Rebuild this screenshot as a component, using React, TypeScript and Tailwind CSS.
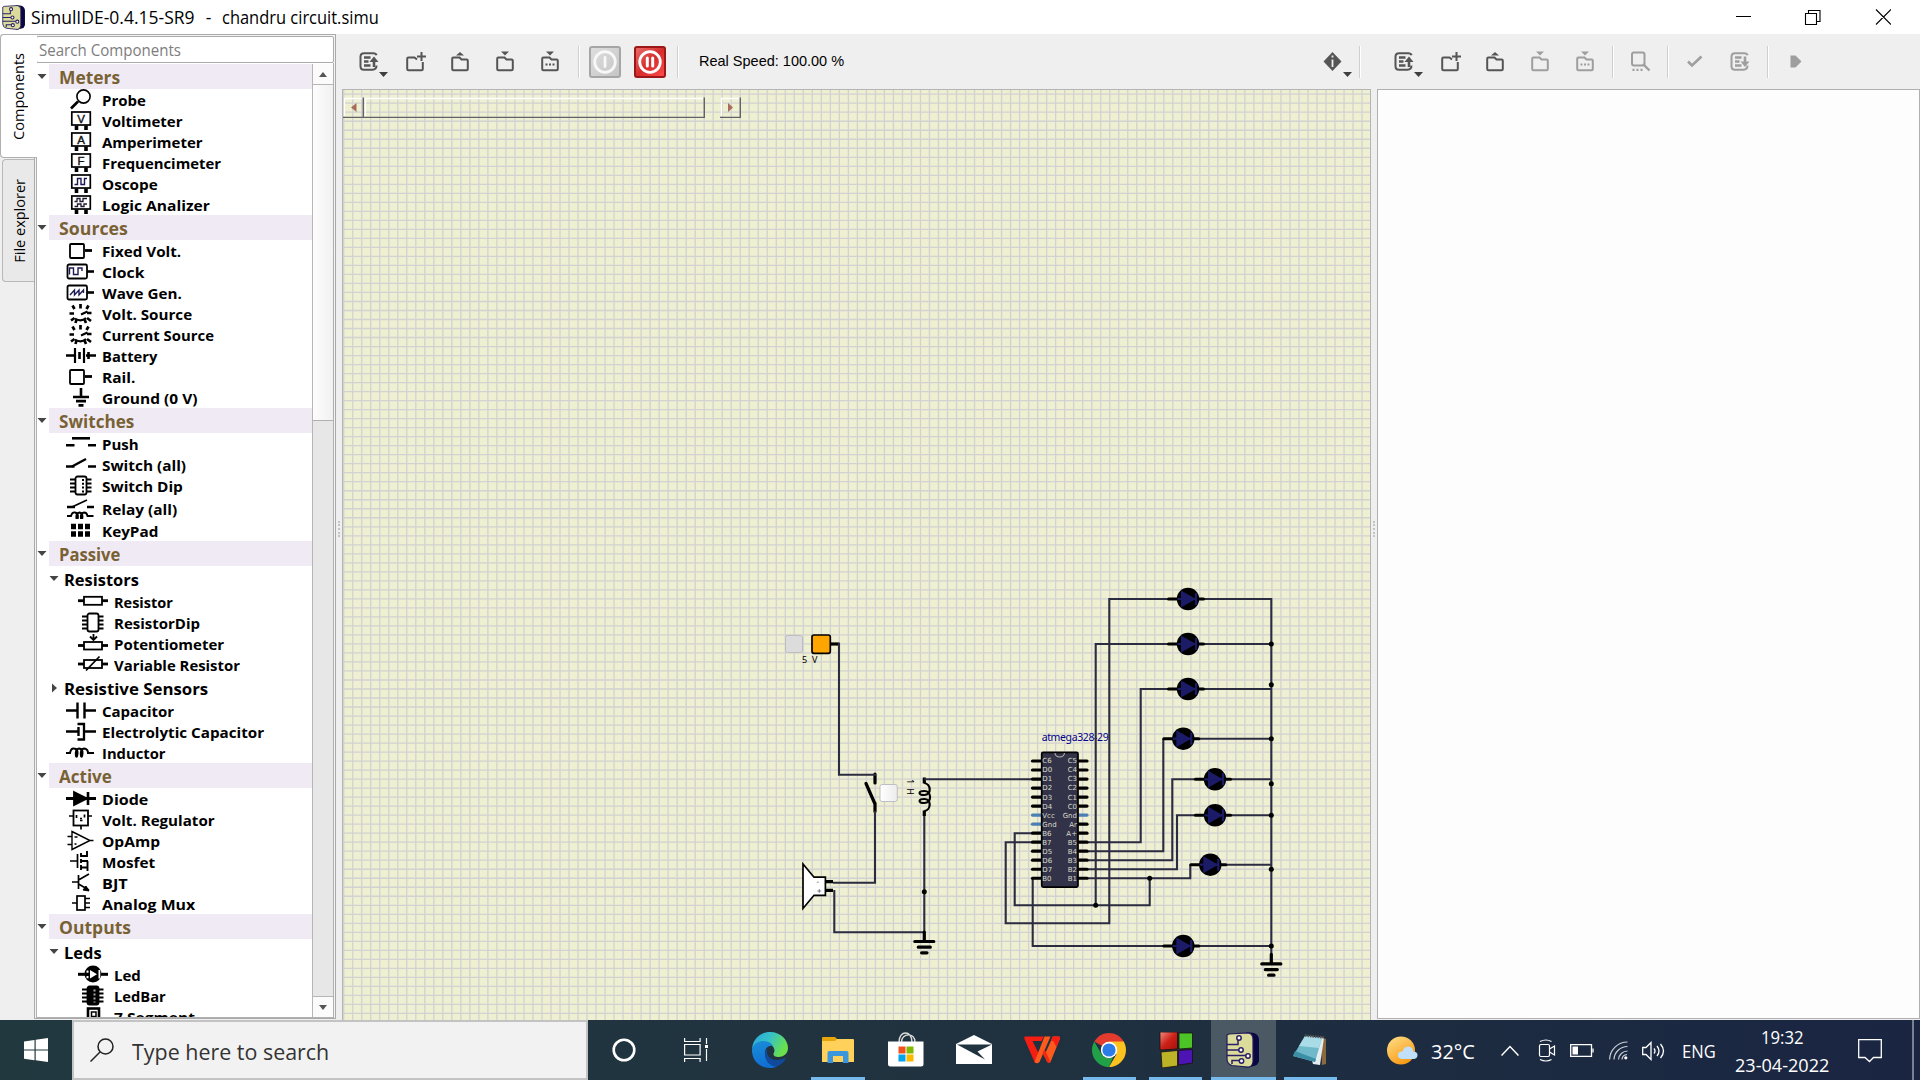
import { useLayoutEffect, useRef, useState, type ReactNode } from "react";

const OS = "font-['Open_Sans','Noto_Sans',sans-serif]";

/** Text condensed or stretched horizontally to an exact width. */
function Fit({ w, className = "", children }: { w: number; className?: string; children: string }) {
  const ref = useRef<HTMLSpanElement>(null);
  const [k, setK] = useState(1);
  useLayoutEffect(() => {
    if (ref.current) setK(w / ref.current.offsetWidth);
  }, [w]);
  return (
    <span className="block shrink-0" style={{ width: w }}>
      <span ref={ref} className={"inline-block origin-left whitespace-pre " + className} style={{ transform: `scaleX(${k})` }}>
        {children}
      </span>
    </span>
  );
}

function SimulIcon({ className }: { className: string }) {
  return (
    <svg className={className} viewBox="0 0 33 36" fill="none">
      <path d="M20 0 L28 1 Q33 3 33 8 V29 Q32 33 28 34 L20 36Z" fill="#0a0840" />
      <path d="M3 2 L22 0.8 Q27 1.5 27 7 V30 Q26 35 22 35.2 L6 33.5 Q1 32 1 27 V3Z" fill="#dbdc9c" stroke="#241a5c" strokeWidth="1.2" />
      <g stroke="#2b1e66" strokeWidth="1.5">
        <path d="M1 12.5H12V8M1 18H13M1 23.500H20M6 32V28.500H13" />
        <g fill="#fff">
          <circle cx="13" cy="6" r="2.200" /><circle cx="15" cy="18" r="2.200" /><circle cx="22" cy="24" r="2.200" /><circle cx="15.500" cy="29" r="2.200" />
        </g>
      </g>
    </svg>
  );
}

const meter = (inner: ReactNode) => (
  <>
    <rect x="5.800" y="2" width="18.500" height="13" strokeWidth="1.700" />
    <path d="M10.500 15.500v4.500M20 15.500v4.500" strokeWidth="3.600" />
    {inner}
  </>
);
const letter = (t: string) => meter(
  <text x="15" y="12.500" textAnchor="middle" fontSize="11.500" fontWeight="500" fill="#111" stroke="#111" strokeWidth="0.400" fontFamily="Liberation Sans">{t}</text>
);
const fixed = (
  <>
    <rect x="4" y="4" width="14" height="14" rx="1" />
    <path d="M19 10.500h7" strokeWidth="2.800" />
  </>
);
const boxed = (d: string) => (
  <g transform="translate(0 1)">
    <rect x="1.500" y="2.500" width="19.500" height="14" rx="1.500" />
    <path d="M21 9.500h7" strokeWidth="2.600" />
    <path d={d} stroke="#1c1a55" strokeWidth="1.400" />
  </g>
);
const dial = (
  <>
    <path d="M14.500 1v4.500M6.500 2.500l2 3.500M22.500 2.500l-2 3.500M3.500 10.500h4.500M21 10h4.500M5 17.500l3.500-2.500M25 18l-4-3M9.500 20l1-3.500M20 20l-1.500-3.500" strokeWidth="2.700" />
    <path d="M9 15.500q6 4 11-.5M15 11.500l6.500-3" strokeWidth="2" />
  </>
);
const dip = (fill: string, inner?: ReactNode) => (
  <>
    <path d="M4 4.500h21.500M4 8.500h21.500M4 12.500h21.500M4 16.500h21.500" strokeWidth="2" />
    <rect x="9.500" y="1.500" width="11" height="18" rx="2" fill={fill} />
    {inner}
  </>
);
const coil = "M0 11h4q1-5 4-4.500q4 .5 3.500 5t-1.500 2.500q-1-7 3-7.500q4 .5 3.500 5t-1.500 2.500q-1-7 3-7.500q4 .5 4 4.500h6";

const ICONS: Record<string, ReactNode> = {
  probe: <><circle cx="17.500" cy="7.500" r="6.600" strokeWidth="1.600" /><path d="M12 12.500L5 19.500" strokeWidth="2.600" /></>,
  V: letter("V"),
  A: letter("A"),
  F: letter("F"),
  scope: meter(<path d="M8.500 11.500h3v-6h3.500v6h3.500v-6h2.500" stroke="#1c1a55" strokeWidth="1.400" />),
  logic: meter(<path d="M8.500 7.500h2.500v-3h3v3h3v-3h4M8.500 12.500h3v-2.500h3.500v2.500h3v-2.500h3" stroke="#221a30" strokeWidth="1.300" />),
  fixed,
  clock: boxed("M3.500 12.500V6h4v6.500h4.500V6h4v3"),
  wave: boxed("M4 12l4.500-5v5l4.500-5v5l4.500-5v3"),
  dial,
  battery: <g transform="translate(0 1)"><path d="M0 9.500h8.500M20 9.500h10" strokeWidth="2.400" /><path d="M9 2v15M18 2v15" strokeWidth="2.200" /><path d="M13.500 6v7M22.500 6v7" strokeWidth="2.600" /></g>,
  ground: <><path d="M15 1v9M7 10h16" strokeWidth="2.600" /><path d="M10 14.200h10M12.500 18.300h5" strokeWidth="2.800" /></>,
  push: <><path d="M0 12.300h8.500M22 12.300h8" strokeWidth="2.600" /><path d="M6 5.300h18" strokeWidth="2.600" /></>,
  sw: <><path d="M0 12.500h8.500M22 12.500h8" strokeWidth="2.600" /><path d="M6 12.500L20 5" strokeWidth="2.400" /></>,
  swdip: dip("#fff", <path d="M17 4v14" strokeDasharray="2 1.800" strokeWidth="2" />),
  relay: <><path d="M1 9h8M21 9h7" strokeWidth="2.400" /><path d="M6 9L21 2M1 18h4q1-4 4-3.500q3 .5 3 4t-1.500 2.500q-1-6 3-6.500q3 .5 3 4t-1.500 2.500q-1-6 3-6.500q3 0 3.500 3.500h6" strokeWidth="1.800" /></>,
  keypad: <path d="M5 6.500h5M12 6.500h5M19 6.500h5M5 14h5M12 14h5M19 14h5" strokeWidth="5.600" />,
  resistor: <><path d="M0 9.700h30" strokeWidth="2.800" /><rect x="6" y="5.800" width="18" height="8" fill="#fff" /></>,
  rdip: dip("#fff"),
  pot: <><path d="M0 12.500h30" strokeWidth="2.800" /><rect x="6" y="9" width="18" height="7.500" fill="#fff" /><path d="M15.500 1v6M12 3.500l3.500 3.500 3.500-3.500" /></>,
  vres: <><path d="M0 10h30" strokeWidth="2.800" /><rect x="6" y="6" width="18" height="8" fill="#fff" /><path d="M8 16.500L21.500 2.500" /></>,
  cap: <><path d="M0 10.500h11M19 10.500h11M11.500 2.500v16M18.500 2.500v16" strokeWidth="2.400" /></>,
  ecap: <><path d="M0 10.500h12M19 10.500h11" strokeWidth="2.400" /><path d="M12.500 6v9" strokeWidth="2.400" /><path d="M11.500 3h6.500v15.500h-6.500" strokeWidth="2.300" /></>,
  ind: <path d={coil} strokeWidth="2" />,
  diode: <g transform="translate(0 1)"><path d="M0 9.500h30" strokeWidth="3" /><path d="M8 3l13 6.500L8 16z" fill="#000" /><path d="M22 3v13" strokeWidth="2.600" /></g>,
  reg: <><rect x="7.500" y="1.500" width="14.500" height="15" /><path d="M3 7h4M22 7h4M15 16.500v4M10.500 6v3M14 11.500h2.500M14 9.500h2M18.500 5.500v3" strokeWidth="1.700" /></>,
  opamp: <><path d="M6 1.500L24 10.500L6 19.500zM1.500 6.500H6M1.500 14.500H6M24 10.500h3.500M8.500 7h3M8.500 14h2" strokeWidth="1.400" /></>,
  mosfet: <><path d="M4 10h7M11.500 3v14" strokeWidth="1.700" /><path d="M15 2v4M15 8v4M15 14v5M15 5h6V0M15 16.500h6.500M21.500 10v10M15 10h7" strokeWidth="1.900" /></>,
  bjt: <><path d="M6 10h6M12.500 3v14M12.500 8L23 2M12.500 12L23 18" strokeWidth="1.700" /><path d="M17 18l6 1-3-5z" fill="#000" strokeWidth="1" /></>,
  mux: <><rect x="11" y="3" width="8" height="14" strokeWidth="1.700" /><path d="M6 10h5M19 5.500h5M19 10h5M19 14.500h5" strokeWidth="1.700" /></>,
  led: <><path d="M0 10.300h30" strokeWidth="3" /><circle cx="15" cy="10" r="8.500" fill="#000" stroke="none" /><path d="M12 6v8.500l7-4.200zM20.500 6h1.800v8.500h-1.800z" fill="#fff" stroke="none" /><path d="M8.500 6.500h2v2.300h-2zM8.500 12h2v2.300h-2z" fill="#fff" stroke="none" /></>,
  ledbar: dip("#000", <path d="M16.500 4.500v13" stroke="#aaa" strokeDasharray="2 2" strokeWidth="2" />),
  seg: <><rect x="10" y="2.500" width="11" height="18" strokeWidth="2.600" /><rect x="13.500" y="6" width="4.500" height="4.500" strokeWidth="1.500" /></>,
};

type Row = { t: "h" | "i" | "s" | "c" | "g"; n: string; w: number; ic?: string };
const h = (n: string, w: number): Row => ({ t: "h", n, w });
const i = (n: string, w: number, ic: string): Row => ({ t: "i", n, w, ic });
const s = (n: string, w: number, ic: string): Row => ({ t: "s", n, w, ic });
const ROWS: Row[] = [
  h("Meters", 61), i("Probe", 44, "probe"), i("Voltimeter", 80, "V"), i("Amperimeter", 101, "A"), i("Frequencimeter", 119, "F"), i("Oscope", 56, "scope"), i("Logic Analizer", 108, "logic"),
  h("Sources", 69), i("Fixed Volt.", 79, "fixed"), i("Clock", 42, "clock"), i("Wave Gen.", 80, "wave"), i("Volt. Source", 90, "dial"), i("Current Source", 112, "dial"), i("Battery", 55, "battery"), i("Rail.", 33, "fixed"), i("Ground (0 V)", 95, "ground"),
  h("Switches", 75), i("Push", 37, "push"), i("Switch (all)", 84, "sw"), i("Switch Dip", 81, "swdip"), i("Relay (all)", 75, "relay"), i("KeyPad", 56, "keypad"),
  h("Passive", 61), { t: "g", n: "Resistors", w: 75 }, s("Resistor", 59, "resistor"), s("ResistorDip", 86, "rdip"), s("Potentiometer", 110, "pot"), s("Variable Resistor", 126, "vres"),
  { t: "c", n: "Resistive Sensors", w: 144 }, i("Capacitor", 72, "cap"), i("Electrolytic Capacitor", 162, "ecap"), i("Inductor", 64, "ind"),
  h("Active", 53), i("Diode", 46, "diode"), i("Volt. Regulator", 113, "reg"), i("OpAmp", 58, "opamp"), i("Mosfet", 53, "mosfet"), i("BJT", 26, "bjt"), i("Analog Mux", 93, "mux"),
  h("Outputs", 72), { t: "g", n: "Leds", w: 38 }, s("Led", 27, "led"), s("LedBar", 52, "ledbar"), s("7 Segment", 81, "seg"),
];

const Tri = ({ right = false }: { right?: boolean }) => (
  <svg className="h-[10px] w-[10px] shrink-0" viewBox="0 0 10 10" fill="#454545">
    {right ? <path d="M3 0.500L8 5L3 9.500z" /> : <path d="M0.500 2h9L5 7z" />}
  </svg>
);

function TreeRow({ r }: { r: Row }) {
  if (r.t === "h")
    return (
      <div className="flex h-[25px] items-center">
        <Tri />
        <div className="ml-[2px] flex h-full flex-1 items-center bg-[#f0eaf5] pl-[10px] text-[18px] leading-[24px] font-bold text-[#786234]">
          <Fit w={r.w}>{r.n}</Fit>
        </div>
      </div>
    );
  if (r.t === "g" || r.t === "c")
    return (
      <div className="flex h-[25px] items-center pl-[12px] text-[16px] font-bold">
        <Tri right={r.t === "c"} />
        <span className="ml-[5px] pt-[3px] leading-[22px]"><Fit w={r.w}>{r.n}</Fit></span>
      </div>
    );
  return (
    <div className={(r.ic === "relay" ? "h-[24px]" : "h-[21px]") + " flex shrink-0 items-center text-[15px] leading-[21px] font-bold " + (r.t === "s" ? "pl-[41px]" : "pl-[29px]")}>
      <svg className="h-[21px] w-[30px] shrink-0" viewBox="0 0 30 21" fill="none" stroke="#000" strokeWidth="1.800">{ICONS[r.ic!]}</svg>
      <span className="ml-[6px] pt-[2px]"><Fit w={r.w}>{r.n}</Fit></span>
    </div>
  );
}

function Sidebar() {
  return (
    <div className={"flex h-full w-[336px] shrink-0 " + OS}>
      <div className="flex w-[34px] shrink-0 flex-col">
        <div className="relative z-10 mr-[-3px] flex h-[124px] items-center justify-center rounded-l-[4px] border border-r-0 border-[#b0b0b0] bg-white pt-px">
          <span className="rotate-180 text-[14.500px] leading-[20px] [writing-mode:vertical-rl]">Components</span>
        </div>
        <div className="mt-px ml-[2px] flex h-[123px] items-center justify-center rounded-l-[4px] border border-r-0 border-[#b8b8b8] bg-[#e9e9e9] pl-[2px]">
          <span className="rotate-180 text-[14.500px] leading-[20px] [writing-mode:vertical-rl]">File explorer</span>
        </div>
      </div>
      <div className="flex h-[985px] w-[302px] shrink-0 flex-col border border-[#a9a9a9] bg-[#f4f4f4] p-[1px] pb-0">
        <div className="flex h-[27px] shrink-0 items-center rounded-[2px] border border-[#ababab] bg-white pl-[2px] text-[15.500px] leading-[22px] text-[#7d7d7d]">
          <Fit w={142}>Search Components</Fit>
        </div>
        <div className="flex min-h-0 flex-1 border border-t-0 border-[#b0b0b0] bg-white pt-[1px]">
          <div className="w-[275px] overflow-hidden">
            {ROWS.map((r) => <TreeRow key={r.n} r={r} />)}
          </div>
          <div className="flex flex-1 flex-col border-l border-[#b6b6b6] bg-[#e7e7e7]">
            <div className="flex h-[21px] items-center justify-center border-b border-[#b6b6b6] bg-[#fbfbfb]">
              <svg className="h-[5px] w-[8px]" viewBox="0 0 8 5" fill="#555"><path d="M0 5L4 0L8 5z" /></svg>
            </div>
            <div className="h-[336px] border-b border-[#b0b0b0] bg-linear-to-r from-[#fdfdfd] to-[#f1f1f1]" />
            <div className="flex-1" />
            <div className="flex h-[21px] items-center justify-center border-t border-[#b6b6b6] bg-[#fbfbfb]">
              <svg className="h-[5px] w-[8px]" viewBox="0 0 8 5" fill="#555"><path d="M0 0L4 5L8 0z" /></svg>
            </div>
          </div>
        </div>
      </div>
    </div>
  );
}

const FOLDER = "M1.200 18V7.700Q1.200 6.500 2.400 6.500H8.500L10.500 8.500H15.600Q16.800 8.500 16.800 9.700V18Q16.800 19.200 15.600 19.200H2.400Q1.200 19.200 1.200 18z";
const TB: Record<string, ReactNode> = {
  listUp: <><path d="M13.500 2.200q3.500-.2 4 2M17.500 14.500q0 4-4 4.200H5q-3.500 0-3.500-3.500V5.700Q1.500 2.200 5 2.200h8.500" /><path d="M5 6.500h6.500M5 10.500h4.500M5 14.500h6.500" strokeWidth="2.400" /><path d="M15 16V9" strokeWidth="2.600" /><path d="M10.500 11L15 5.500L19.500 11z" fill="currentColor" stroke="none" /></>,
  listDown: <><path d="M13.500 2.200q3.500-.2 4 2M17.500 14.500q0 4-4 4.200H5q-3.500 0-3.500-3.500V5.700Q1.500 2.200 5 2.200h8.500" /><path d="M5 6.500h6.500M5 10.500h4.500M5 14.500h6.500" strokeWidth="2.400" /><path d="M15 5.500V12" strokeWidth="2.600" /><path d="M10.500 10.500L15 16L19.500 10.500z" fill="currentColor" stroke="none" /></>,
  fresh: <path d="M11 8.500L8.500 6.500H2.400Q1.200 6.500 1.200 7.700V18Q1.200 19.200 2.400 19.200H15.600Q16.800 19.200 16.800 18V11M11 5.500h9M15.500 1v9" />,
  open: <><path d={FOLDER} /><path d="M5 4.500L9 1L13 4.500z" fill="currentColor" stroke="none" /></>,
  save: <><path d={FOLDER} /><path d="M5 0.500L9 4.500L13 0.500z" fill="currentColor" stroke="none" /></>,
  saveAs: <><path d={FOLDER} /><path d="M5 0.500L9 4.500L13 0.500z" fill="currentColor" stroke="none" /><path d="M4.500 13.500h2M8 13.500h2M11.500 13.500h2" strokeWidth="2.200" /></>,
  find: <><rect x="2" y="1.500" width="12.500" height="13" rx="2" /><path d="M13 13l6.500 6.500" strokeWidth="2.400" /><path d="M2.500 18.800h2M6.500 18.800h2M10.500 18.800h2" strokeWidth="2.200" /></>,
  check: <path d="M3 10.500l4 4 9.500-9" strokeWidth="2.600" />,
  play: <path d="M1.500 4.500h5L12.500 10.500L6.500 16.500h-5z" fill="currentColor" stroke="none" />,
  info: <><path d="M9.500 1L18.500 10.500L9.500 20L0.500 10.500z" fill="currentColor" stroke="none" /><path d="M9.500 8.500v7.500M9.500 4.500v2" stroke="#eee" strokeWidth="1.800" /></>,
};
const Btn = ({ n, ml, dim = false, drop = false }: { n: string; ml: string; dim?: boolean; drop?: boolean }) => (
  <span className={ml + " relative h-[21px] w-[21px] shrink-0 " + (dim ? "text-[#9e9e9e]" : "text-[#555]")}>
    <svg className="h-[21px] w-[21px]" viewBox="0 0 21 21" fill="none" stroke="currentColor" strokeWidth="2">{TB[n]}</svg>
    {drop && <svg className="absolute top-[21px] left-[20px] h-[5px] w-[9px]" viewBox="0 0 10 5" preserveAspectRatio="none" fill="#3f3f3f"><path d="M0 0h10L5 5z" /></svg>}
  </span>
);
const Sep = ({ ml }: { ml: string }) => <span className={ml + " h-[32px] w-[2px] shrink-0 border-l border-[#cfcfcf] bg-white"} />;

function PowerBtn({ on = false, ml }: { on?: boolean; ml: string }) {
  return (
    <span className={ml + " flex h-[32px] w-[32px] shrink-0 items-center justify-center rounded-[3px] border-2 " + (on ? "border-[#9c1717] bg-linear-to-br from-[#e86a6a] via-[#d52c2c] to-[#ff4a4a]" : "border-[#a6a6a6] bg-linear-to-br from-[#dedede] to-[#c6c6c6]")}>
      <svg className="h-[26px] w-[26px]" viewBox="0 0 26 26" fill="none" stroke={on ? "#fff" : "#f8f8f8"} strokeWidth="2.800" strokeLinecap="round">
        <circle cx="13" cy="13" r="10.300" />
        {on ? <path d="M10.300 9v8M15.700 9v8" strokeWidth="3" /> : <path d="M13 8.500v9" />}
      </svg>
    </span>
  );
}

const GRID = 9.012;
const GRID_X = Array.from({ length: 114 }, (_, k) => 343.700 + k * GRID).map((x) => `M${x.toFixed(2)} 90V1020`).join("");
const GRID_Y = Array.from({ length: 103 }, (_, k) => 94.200 + k * GRID).map((y) => `M343 ${y.toFixed(2)}H1371`).join("");
const LEDS = [[1188, 599], [1188, 644], [1188, 689], [1183.3, 738.7], [1215, 779.3], [1215, 815.3], [1210.3, 864.7], [1183.3, 946]];
const NODES = [[1271.3, 644], [1271.3, 684.7], [1271.3, 738.7], [1271.3, 783.7], [1271.3, 815.3], [1271.3, 869.3], [1271.3, 946], [1149.7, 878.2], [1095.7, 905.2], [924.3, 891.7]];
const LEFT = ["C6", "D0", "D1", "D2", "D3", "D4", "Vcc", "Gnd", "B6", "B7", "D5", "D6", "D7", "B0"];
const RIGHT = ["C5", "C4", "C3", "C2", "C1", "C0", "Gnd", "Ar", "A+", "B5", "B4", "B3", "B2", "B1"];
const Gnd = ({ x, y }: { x: number; y: number }) => (
  <path d={`M${x} ${y}v9M${x - 9.500} ${y + 9.500}h19M${x - 6} ${y + 15.200}h12M${x - 2.700} ${y + 20.800}h5.400`} stroke="#000" strokeWidth="3.200" strokeLinecap="round" />
);

function Circuit() {
  return (
    <svg className="block h-[930px] w-[1027px]" viewBox="343 90 1027 930" fill="none">
      <defs>
        <linearGradient id="btn" x2="1"><stop stopColor="#fff" /><stop offset="1" stopColor="#ececec" /></linearGradient>
      </defs>
      <rect x="343" y="90" width="1028" height="930" fill="#efefd2" />
      <path d={GRID_X + GRID_Y} stroke="#d2d2d2" strokeWidth="1.300" />
      <text x="1041.700" y="741" textLength="67" fontSize="10.500" fill="#00008c" fontFamily="Noto Sans">atmega328-29</text>

      <rect x="785.500" y="635.500" width="17" height="17" rx="2" fill="#dcdcdc" stroke="#bdbdbd" />
      <path d="M831 644h8.500" stroke="#000" strokeWidth="3.200" />
      <rect x="812" y="635" width="18.300" height="18.300" rx="2" fill="#ffa500" stroke="#000" strokeWidth="1.700" />
      <text x="802" y="663" fontSize="9" textLength="15.500" fill="#000" fontFamily="Noto Sans">5 V</text>

      <path d="M875 774v9M875 803v8.500M866 783.500L875 804" stroke="#000" strokeWidth="3.200" strokeLinecap="round" />
      <rect x="880" y="784.500" width="17.300" height="17" rx="2" fill="url(#btn)" stroke="#bdbdc4" />
      <text transform="translate(907 779) rotate(90)" fontSize="9" textLength="16" fill="#000" fontFamily="Noto Sans">1 H</text>

      <path d="M924.300 783C931 784 932 795 924.300 795C918 795 918 791 924.300 791C932 791 932 803 924.300 803C918 803 918 799 924.300 799C932 799 931 810.500 924.300 811" stroke="#000" strokeWidth="2.200" />
      <path d="M924.300 777.500v6M924.300 810.500v5.500M826 881.700h7M826 890.400h7" stroke="#000" strokeWidth="3.200" />
      <path d="M803 864L814 877.200H825.400V895.300H814L803 908.500z" fill="#fff" stroke="#000" strokeWidth="1.700" />
      <text x="816.500" y="884" fontSize="7" fill="#223" fontFamily="DejaVu Sans">-</text>
      <text x="816.500" y="892.500" fontSize="6.500" fill="#223" fontFamily="DejaVu Sans">+</text>

      <g stroke="#2b2b42" strokeWidth="2.100">
        <path d="M839 643V774.700H876M875 811V882.700H833M834.300 890V932.300H924.300M924.300 816V934M924.300 779.200H1032" />
        <path d="M1032 833.300H1014.700V905.200H1149.700V878.200" />
        <path d="M1032 842.300H1005.700V923.300H1109.300V599H1168M1095.700 905.200V644H1168" />
        <path d="M1087 842.300H1140.700V689H1168M1087 851.300H1163.300V738.700M1087 860.300H1172.300V779.300H1195M1087 869.300H1177V815.300H1195M1087 878.300H1190.300V864.700M1032.700 878V946H1163" />
        <path d="M1271.300 598V956" />
        {LEDS.map(([x, y]) => <path key={x + "-" + y} d={`M${x + 16} ${y}H1271.300`} />)}
      </g>

      {LEFT.map((t, k) => <path key={k} d={`M1032.500 ${761 + k * 9.020}h9`} stroke={t.length > 2 ? "#4b7fb4" : "#000"} strokeWidth="3.200" strokeLinecap="round" />)}
      {RIGHT.map((t, k) => <path key={k} d={`M1078 ${761 + k * 9.020}h9`} stroke={t.length > 2 ? "#4b7fb4" : "#000"} strokeWidth="3.200" strokeLinecap="round" />)}
      <rect x="1041.700" y="752.300" width="36.300" height="134.800" rx="1.500" fill="#323248" stroke="#000" strokeWidth="1.700" />
      <path d="M1055 753a4.700 4 0 0 0 9.400 0" stroke="#b5b5b0" strokeWidth="1.100" />
      <g fontSize="7" fill="#dcdcc8" fontFamily="DejaVu Sans">
        {LEFT.map((t, k) => <text key={k} x="1042.300" y={763.300 + k * 9.060}>{t}</text>)}
        {RIGHT.map((t, k) => <text key={k} x="1077" textAnchor="end" y={763.300 + k * 9.060}>{t}</text>)}
      </g>

      {LEDS.map(([x, y]) => (
        <g key={x + "/" + y}>
          <path d={`M${x - 19.500} ${y}h35`} stroke="#000" strokeWidth="3" strokeLinecap="round" />
          <circle cx={x} cy={y} r="11.200" fill="#000" />
          <path d={`M${x - 7} ${y - 8.500}L${x + 8} ${y}L${x - 7} ${y + 8.500}z`} fill="#1b1b68" />
          <path d={`M${x - 10.500} ${y}h19M${x + 8} ${y - 6}v12`} stroke="#1b1b68" strokeWidth="2.200" />
        </g>
      ))}
      {NODES.map(([x, y]) => <circle key={x + "," + y} cx={x} cy={y} r="2.500" fill="#000" />)}
      <Gnd x={924.3} y={932} />
      <Gnd x={1271.3} y={954.4} />

      <g strokeWidth="1.300">
        <path d="M344.500 116V98.500H362M365.500 116V98.500H703M721.500 116V98.500H739.500" stroke="#fff" />
        <path d="M343 117.400H363.300V97.500M364 117.400H704.300V97.500M720 117.400H740.300V97.500" stroke="#62626a" strokeWidth="1.400" />
      </g>
      <path d="M356.500 103v9L351 107.500zM728 103v9l5-4.500z" fill="#a66e5a" />
    </svg>
  );
}

const Cell = ({ w, active = false, bar = "", children }: { w: string; active?: boolean; bar?: string; children?: ReactNode }) => (
  <div className={w + " flex h-full shrink-0 flex-col items-center " + (active ? "bg-[#4a5964]" : "")}>
    <div className="flex w-full flex-1 items-center justify-center pt-[3px]">{children}</div>
    <div className={bar ? bar + " h-[3px] bg-[#76b9ed]" : "h-[3px]"} />
  </div>
);

function Taskbar() {
  return (
    <div className={"flex h-[60px] w-full shrink-0 items-center bg-linear-to-r from-[#21383f] via-[#20323f] to-[#1a2542] text-white " + OS}>
      <div className="flex w-[72px] shrink-0 justify-center">
        <svg className="h-[24px] w-[24px]" viewBox="0 0 24 24" fill="#fff"><path d="M0 3.500L10.500 2V11.500H0zM11.700 1.800L24 0V11.500H11.700zM0 12.600H10.500V22.200L0 20.800zM11.700 12.600H24V24L11.700 22.300z" /></svg>
      </div>
      <div className="flex h-full w-[516px] shrink-0 items-center border-2 border-[#c3c3c3] bg-[#f2f2f2] pl-[16px] text-[21px] text-[#333]">
        <svg className="h-[24px] w-[24px]" viewBox="0 0 24 24" fill="none" stroke="#222" strokeWidth="1.500"><circle cx="15.500" cy="8.500" r="7.500" /><path d="M10 14L0.500 23.500" /></svg>
        <span className="ml-[18px] pt-[3px] leading-[28px]"><Fit w={197}>Type here to search</Fit></span>
      </div>
      <Cell w="w-[72px]">
        <svg className="h-[24px] w-[24px]" viewBox="0 0 24 24" fill="none" stroke="#fff" strokeWidth="2.600"><circle cx="12" cy="12" r="10.300" /></svg>
      </Cell>
      <Cell w="w-[72px]">
        <svg className="h-[24px] w-[24px]" viewBox="0 0 24 24" fill="none" stroke="#fff" strokeWidth="1.200"><path d="M.6 0v3.500h15.500V0M.6 24v-3.500h15.500V24M.6 6.500h15.500v10.500H.6zM22.500 0v6M22.500 11v12" /><path d="M21 7h3v3h-3z" fill="#fff" stroke="none" /></svg>
      </Cell>
      <Cell w="w-[76px]">
        <svg className="h-[36px] w-[36px]" viewBox="0 0 36 36">
          <defs>
            <linearGradient id="e1" x2="1" y2=".4"><stop stopColor="#2aa5de" /><stop offset=".5" stopColor="#35c1c9" /><stop offset="1" stopColor="#69e04c" /></linearGradient>
            <linearGradient id="e2" y2="1" x2=".3"><stop stopColor="#1b8fd8" /><stop offset="1" stopColor="#0f6fd4" /></linearGradient>
          </defs>
          <path d="M0 17C1 6 9 0 18 0C29 0 36 8 36 16C36 22 31 25 26.500 25C22 25 20.500 23 22 20.500C24 16 19 10.500 11.500 10.500C6 10.500 2 13 0 17z" fill="url(#e1)" />
          <path d="M0 17C2 11 7 9 11.500 9C17 9 20 12 21 14C16 13 12.500 17 13 22C13.500 29 20 34.500 25 34.500C22 36 20 36 18 36C7 36-.5 28 0 17z" fill="url(#e2)" />
          <path d="M13.500 19C11 27 18 35.500 25 34.500C29 33 32 30 33.500 27C33.500 26 32.500 26 31.500 26.500C24 30 15 27 15 19.500C15 17 14 17 13.500 19z" fill="#114a9b" />
        </svg>
      </Cell>
      <Cell w="w-[60px]" bar="w-[54px]">
        <svg className="h-[28px] w-[32px]" viewBox="0 0 32 28"><path d="M0 2Q0 1 1 1H13L15 3V7H0z" fill="#e6a50a" /><path d="M0 5H13L15 3H31Q32 3 32 4V26H0z" fill="#ffd05a" /><path d="M5.500 27V17Q5.500 15 7.500 15H24.500Q26.500 15 26.500 17V27H21V20H11V27z" fill="#3a96dd" /></svg>
      </Cell>
      <Cell w="w-[75px]">
        <svg className="h-[36px] w-[36px]" viewBox="0 0 36 36" fill="none"><path d="M11 10C11-2 24-2 24 10M13.500 10C13.500 1 27 0 27 10" stroke="#ddd" strokeWidth="1.300" /><path d="M0 9.500H35.500V32Q35.500 34.500 33 34.500H2.500Q0 34.500 0 32z" fill="#fff" /><path d="M10.500 14.500h7v7h-7z" fill="#f1511b" /><path d="M18.500 14.500h7v7h-7z" fill="#80b900" /><path d="M10.500 22.500h7v7h-7z" fill="#00a3ee" /><path d="M18.500 22.500h7v7h-7z" fill="#fbb800" /></svg>
      </Cell>
      <Cell w="w-[62px]">
        <svg className="h-[30px] w-[36px]" viewBox="0 0 36 30"><path d="M0 9L18 0L36 9V29H0z" fill="#fff" /><path d="M1 9.500H36L21.500 16.500L29 24.500z" fill="#20343f" /></svg>
      </Cell>
      <Cell w="w-[74px]">
        <svg className="mr-px h-[28px] w-[36px]" viewBox="0 0 36 28" fill="none">
          <path d="M1 .5H20L17.500 5H8.500L16 20L13.500 26.500Q12 28 10.500 26L.3 2.500Q0 .5 1 .5z" fill="#f61d12" />
          <path d="M20.500 .5H26.500L15.500 26Q13 28.500 10.500 26z" fill="#ff5a1e" />
          <path d="M29 .5H35Q36.500 1 35.800 3L26.500 26Q25 28 23.500 26L20.500 19z" fill="#ff5a1e" />
          <path d="M28.500 .5H35Q36.500 1 35.800 3L32.500 11L29.500 5.500L27 4.500z" fill="#f61d12" />
          <path d="M20.500 13L26.500 26Q25 28 23 26L18.500 17.500z" fill="#ee2a14" />
        </svg>
      </Cell>
      <Cell w="w-[61px]" bar="w-[53px]">
        <svg className="mr-[2px] h-[34px] w-[34px]" viewBox="0 0 34 34"><path d="M17 17L2.300 8.500A17 17 0 0 1 31.700 8.500z" fill="#e33b2e" /><path d="M17 8.500H31.700A17 17 0 0 1 17 34L24.400 21.200z" fill="#fcc31e" /><path d="M2.300 8.500L9.600 21.200Q13 25 17 25.500L21 24.500L17 34A17 17 0 0 1 2.300 8.500z" fill="#22a047" /><circle cx="17" cy="17" r="8.200" fill="#fff" /><circle cx="17" cy="17" r="6.600" fill="#2b7be9" /></svg>
      </Cell>
      <Cell w="w-[71px]" bar="w-[53px]">
        <svg className="h-[36px] w-[34px]" viewBox="0 0 34 36" stroke="#1a1010" strokeWidth=".8"><defs><linearGradient id="r1" x2="1" y2="1"><stop stopColor="#f08a80" /><stop offset=".5" stopColor="#cc2017" /><stop offset="1" stopColor="#a5120c" /></linearGradient></defs><path d="M1 0H18.500V17L1 18z" fill="url(#r1)" /><path d="M20 1H33.500V16L20 17z" fill="#4cc428" /><path d="M2 20L18.500 18.500V34L3 36z" fill="#bdb327" /><path d="M19.500 18.500L33.500 17.500V31L19.500 33z" fill="#4c14b4" /></svg>
      </Cell>
      <Cell w="w-[65px]" active bar="w-full"><SimulIcon className="mr-[2px] h-[36px] w-[33px]" /></Cell>
      <Cell w="w-[69px]" bar="w-[53px]">
        <svg className="mr-[3px] h-[32px] w-[33px]" viewBox="0 0 33 32"><path d="M28 3L33 5V30L29 31z" fill="#8a6a3c" /><path d="M12 2L31 4L27 31L20 30z" fill="#e6edf0" /><path d="M12 2L29 4L22 28L0 22z" fill="#6fb9cb" /><path d="M12 2L29 4L26 14L6 12z" fill="#a9dce6" /><path d="M0 22L2 17L23 25L22 28z" fill="#3c8fa4" /><path d="M12 1.500L31 3.500" stroke="#555" strokeWidth="2.500" strokeDasharray="1.500 1" /></svg>
      </Cell>
      <div className="ml-[42px] flex h-full flex-1 items-center pt-[1px]">
        <svg className="h-[30px] w-[31px] shrink-0" viewBox="0 0 31 30"><defs><linearGradient id="sun" x2=".6" y2="1"><stop stopColor="#ffe08a" /><stop offset="1" stopColor="#f99a15" /></linearGradient></defs><circle cx="14" cy="14.500" r="14" fill="url(#sun)" /><path d="M15 23Q10.500 22.500 11 18.500Q11.500 15 15.500 15.500Q17 10.500 21.500 10.500Q26 11 26 15.500Q30.500 15.500 30.500 19Q30.500 22.500 27 23z" fill="#bfe0f8" /></svg>
        <span className="ml-[13px] pt-[3px] text-[19.500px] leading-[26px]"><Fit w={44}>32°C</Fit></span>
        <svg className="ml-[26px] h-[11px] w-[18px] shrink-0" viewBox="0 0 18 11" fill="none" stroke="#fff" strokeWidth="1.500"><path d="M.5 10.500L9 1.500L17.500 10.500" /></svg>
        <svg className="ml-[19px] h-[23px] w-[18px] shrink-0" viewBox="0 0 18 23" fill="none" stroke="#fff" strokeWidth="1.200"><rect x="1.500" y="5.500" width="10" height="12" rx="1.500" /><path d="M11.500 10L16.500 7V16L11.500 13M2 2.500Q8-.5 13.500 2.500M2 20.500Q8 23.500 13.500 20.500" /></svg>
        <svg className="ml-[14px] h-[13px] w-[24px] shrink-0" viewBox="0 0 24 13" fill="none" stroke="#fff" strokeWidth="1.300"><path d="M.7.700H21.500V12.300H.7z" /><path d="M2.500 2.500h5.500v8H2.500z" fill="#fff" stroke="none" /><path d="M23 4.500v4" /></svg>
        <svg className="ml-[15px] h-[19px] w-[19px] shrink-0" viewBox="0 0 19 19" fill="none" stroke="#c9d0d8" strokeWidth="1.200"><path d="M.6 18.500A18 18 0 0 1 18.500 1M5 18.500A13.500 13.500 0 0 1 18.500 5.500M9.500 18.500A9 9 0 0 1 18.500 10" /><circle cx="16.800" cy="16.800" r="1.600" fill="#fff" stroke="none" /><path d="M13 18.500a5.500 5.500 0 0 1 5-5" /></svg>
        <svg className="ml-[14px] h-[20px] w-[23px] shrink-0" viewBox="0 0 23 20" fill="none" stroke="#fff" strokeWidth="1.300"><path d="M.7 6.500H4L9 1.500V18.500L4 13.500H.7zM12 7.500q2 2.500 0 5M15 5q4 5 0 10M18.500 3q6 7 0 14" /></svg>
        <span className="ml-[17px] text-[17.500px] leading-[24px]"><Fit w={34}>ENG</Fit></span>
        <div className="ml-[19px] flex flex-col items-center text-[17.500px] leading-[28px]">
          <Fit w={43}>19:32</Fit>
          <Fit w={94}>23-04-2022</Fit>
        </div>
        <svg className="ml-[29px] h-[24px] w-[24px] shrink-0" viewBox="0 0 24 24" fill="none" stroke="#fff" strokeWidth="1.300"><path d="M.7.700H23.300V18.500H15.500L11.500 22.500L7 18.500H.7z" /></svg>
        <span className="-my-px ml-[30px] h-[61px] w-[2px] bg-[#78818f]" />
      </div>
    </div>
  );
}

export default function App() {
  return (
    <div className="flex h-[1080px] w-[1920px] flex-col overflow-hidden bg-[#efefef] text-black">
      <header className={"flex h-[34px] shrink-0 items-center bg-white pl-[2px] text-[17.500px] " + OS}>
        <SimulIcon className="h-[25px] w-[23px]" />
        <div className="ml-[6px] flex leading-[26px]">
          <Fit w={164}>SimulIDE-0.4.15-SR9</Fit>
          <span className="w-[27px] text-center">-</span>
          <Fit w={157}>chandru circuit.simu</Fit>
        </div>
        <svg className="ml-auto h-[16px] w-[155px]" viewBox="0 0 155 16" fill="none" stroke="#000" strokeWidth="1.100"><path d="M0 7.500h15M69.500 4.500h11v11h-11zM72.500 4V1.500h11.500v11h-3M140 .5l15 15M155 .5l-15 15" /></svg>
        <span className="w-[29px]" />
      </header>
      <main className="flex h-[986px] shrink-0">
        <Sidebar />
        <div className="flex w-[6px] shrink-0 flex-col items-center justify-center pt-[3px]">
          <span className="h-[16px] border-l-2 border-dotted border-[#c4c4c4]" />
        </div>
        <section className="flex w-[1029px] shrink-0 flex-col">
          <div className="flex h-[55px] shrink-0 items-center">
            <Btn n="listUp" ml="ml-[17px]" drop />
            <Btn n="fresh" ml="ml-[26px]" />
            <Btn n="open" ml="ml-[24px]" />
            <Btn n="save" ml="ml-[24px]" />
            <Btn n="saveAs" ml="ml-[24px]" />
            <Sep ml="ml-[16px]" />
            <PowerBtn ml="ml-[9px]" />
            <PowerBtn ml="ml-[13px]" on />
            <Sep ml="ml-[11px]" />
            <span className="ml-[20px] font-['Liberation_Sans',sans-serif] text-[15px]"><Fit w={145}>Real Speed: 100.00 %</Fit></span>
            <Btn n="info" ml="ml-auto" drop />
            <Sep ml="ml-[15px]" />
            <span className="w-[10px]" />
          </div>
          <div className="flex-1 border border-b-0 border-[#b4b4b4]"><Circuit /></div>
        </section>
        <div className="flex w-[6px] shrink-0 flex-col items-center justify-center pt-[3px]">
          <span className="h-[16px] border-l-2 border-dotted border-[#c4c4c4]" />
        </div>
        <section className="flex flex-1 flex-col pb-[1px]">
          <div className="flex h-[55px] shrink-0 items-center">
            <Btn n="listUp" ml="ml-[17px]" drop />
            <Btn n="fresh" ml="ml-[26px]" />
            <Btn n="open" ml="ml-[24px]" />
            <Btn n="save" ml="ml-[24px]" dim />
            <Btn n="saveAs" ml="ml-[24px]" dim />
            <Sep ml="ml-[15px]" />
            <Btn n="find" ml="ml-[16px]" dim />
            <Sep ml="ml-[16px]" />
            <Btn n="check" ml="ml-[16px]" dim />
            <Btn n="listDown" ml="ml-[24px]" dim />
            <Sep ml="ml-[16px]" />
            <Btn n="play" ml="ml-[20px]" dim />
          </div>
          <div className="flex-1 border border-[#b0b0b0] bg-[#fdfdfd]" />
        </section>
      </main>
      <Taskbar />
    </div>
  );
}
